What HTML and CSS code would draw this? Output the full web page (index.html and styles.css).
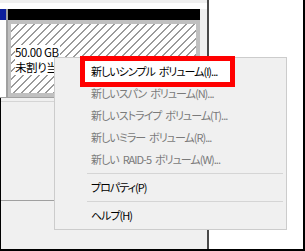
FILE: index.html
```html
<!DOCTYPE html>
<html lang="ja">
<head>
<meta charset="utf-8">
<link rel="stylesheet" href="styles.css">
</head>
<body>
<div class="frame">
  <div class="main">
    <div class="upper">
      <div class="strip-a"></div>
      <div class="strip-b"></div>
      <div class="diskrow">
        <div class="label-col"><div class="blue"></div></div>
        <div class="vdiv"></div>
        <div class="disk">
          <div class="disk-hdr"></div>
          <div class="disk-body">
            <span class="vol-line">50.00 GB</span>
            <span class="vol-line">未割り当て</span>
          </div>
        </div>
        <div class="rest"></div>
      </div>
    </div>
    <div class="lower">
      <div class="row-a"></div>
      <div class="row-b"></div>
    </div>
  </div>
  <div class="vline"></div>
  <div class="pane"></div>

  <div class="menu">
    <div class="item"><span class="hl">新しいシンプル ボリューム(I)...</span></div>
    <div class="item disabled">新しいスパン ボリューム(N)...</div>
    <div class="item disabled">新しいストライプ ボリューム(T)...</div>
    <div class="item disabled">新しいミラー ボリューム(R)...</div>
    <div class="item disabled">新しい RAID-5 ボリューム(W)...</div>
    <div class="sep"></div>
    <div class="item">プロパティ(P)</div>
    <div class="sep"></div>
    <div class="item">ヘルプ(H)</div>
  </div>
</div>
</body>
</html>
```

FILE: styles.css
```css
html, body {
  margin: 0;
  padding: 0;
  background: #ffffff;
}

body {
  font-family: "Noto Sans CJK JP", "Noto Sans", sans-serif;
  font-feature-settings: "palt";
  font-size: 12px;
  color: #000;
}

.frame {
  position: relative;
  width: 303px;
  height: 249px;
  border-right: 2px solid #000;
  border-bottom: 2px solid #000;
  display: flex;
}

.main {
  width: 207px;
  display: flex;
  flex-direction: column;
}

.upper {
  height: 98px;
  display: flex;
  flex-direction: column;
}

.strip-a {
  height: 3px;
  background: #f0f0f0;
}

.strip-b {
  height: 6px;
  background: #ffffff;
}

.diskrow {
  height: 88px;
  display: flex;
  border-bottom: 1px solid #a0a0a0;
}

.label-col {
  width: 6px;
  background: #ffffff;
}

.blue {
  height: 11px;
  background: #0b1e9b;
}

.vdiv {
  width: 2px;
  background: #a0a0a0;
}

.disk {
  width: 192px;
  display: flex;
  flex-direction: column;
}

.disk-hdr {
  height: 11px;
  background: #000;
}

.disk-body {
  flex: 1;
  border-style: solid;
  border-color: #c0c0c0;
  border-width: 4px 4px 4px 3px;
  background: repeating-linear-gradient(135deg, #ffffff 0 4.6px, #9a9a9a 4.6px 5.66px);
  display: flex;
  flex-direction: column;
  align-items: flex-start;
  padding: 21px 0 0 4px;
  overflow: hidden;
}

.vol-line {
  background: #ffffff;
  line-height: 15px;
  height: 15px;
  font-size: 11.5px;
  letter-spacing: -0.4px;
  padding-right: 1px;
}

.rest {
  flex: 1;
  background: #f0f0f0;
}

.lower {
  flex: 1;
  background: #f0f0f0;
  border-left: 1px solid #000;
}

.row-a {
  height: 3px;
  border-bottom: 1px solid #d5d5d5;
}

.row-b {
  height: 98px;
  border-bottom: 1px solid #a0a0a0;
}

.vline {
  width: 2px;
  background: #4a4a4a;
}

.pane {
  flex: 1;
  background: #ffffff;
}

.menu {
  position: absolute;
  left: 54px;
  top: 57px;
  width: 233px;
  height: 173px;
  box-sizing: border-box;
  border: 1px solid #cccccc;
  background: #f0f0f0;
  padding: 2px 1px 3px 1px;
}

.item {
  height: 22px;
  padding-left: 35px;
  display: flex;
  align-items: center;
  white-space: pre;
  color: #000;
  font-size: 11px;
  letter-spacing: -1px;
  word-spacing: 2.5px;
}

.item.disabled {
  color: #7a7a7a;
}

.sep {
  height: 1px;
  margin: 3px 2px 2px 31px;
  background: #d5d5d5;
}

.hl {
  flex-shrink: 0;
  display: inline-flex;
  align-items: center;
  box-sizing: border-box;
  width: 155px;
  height: 31px;
  border: 5px solid #ff0000;
  background: #ffffff;
  margin-left: -11px;
  padding-left: 6px;
}
```
